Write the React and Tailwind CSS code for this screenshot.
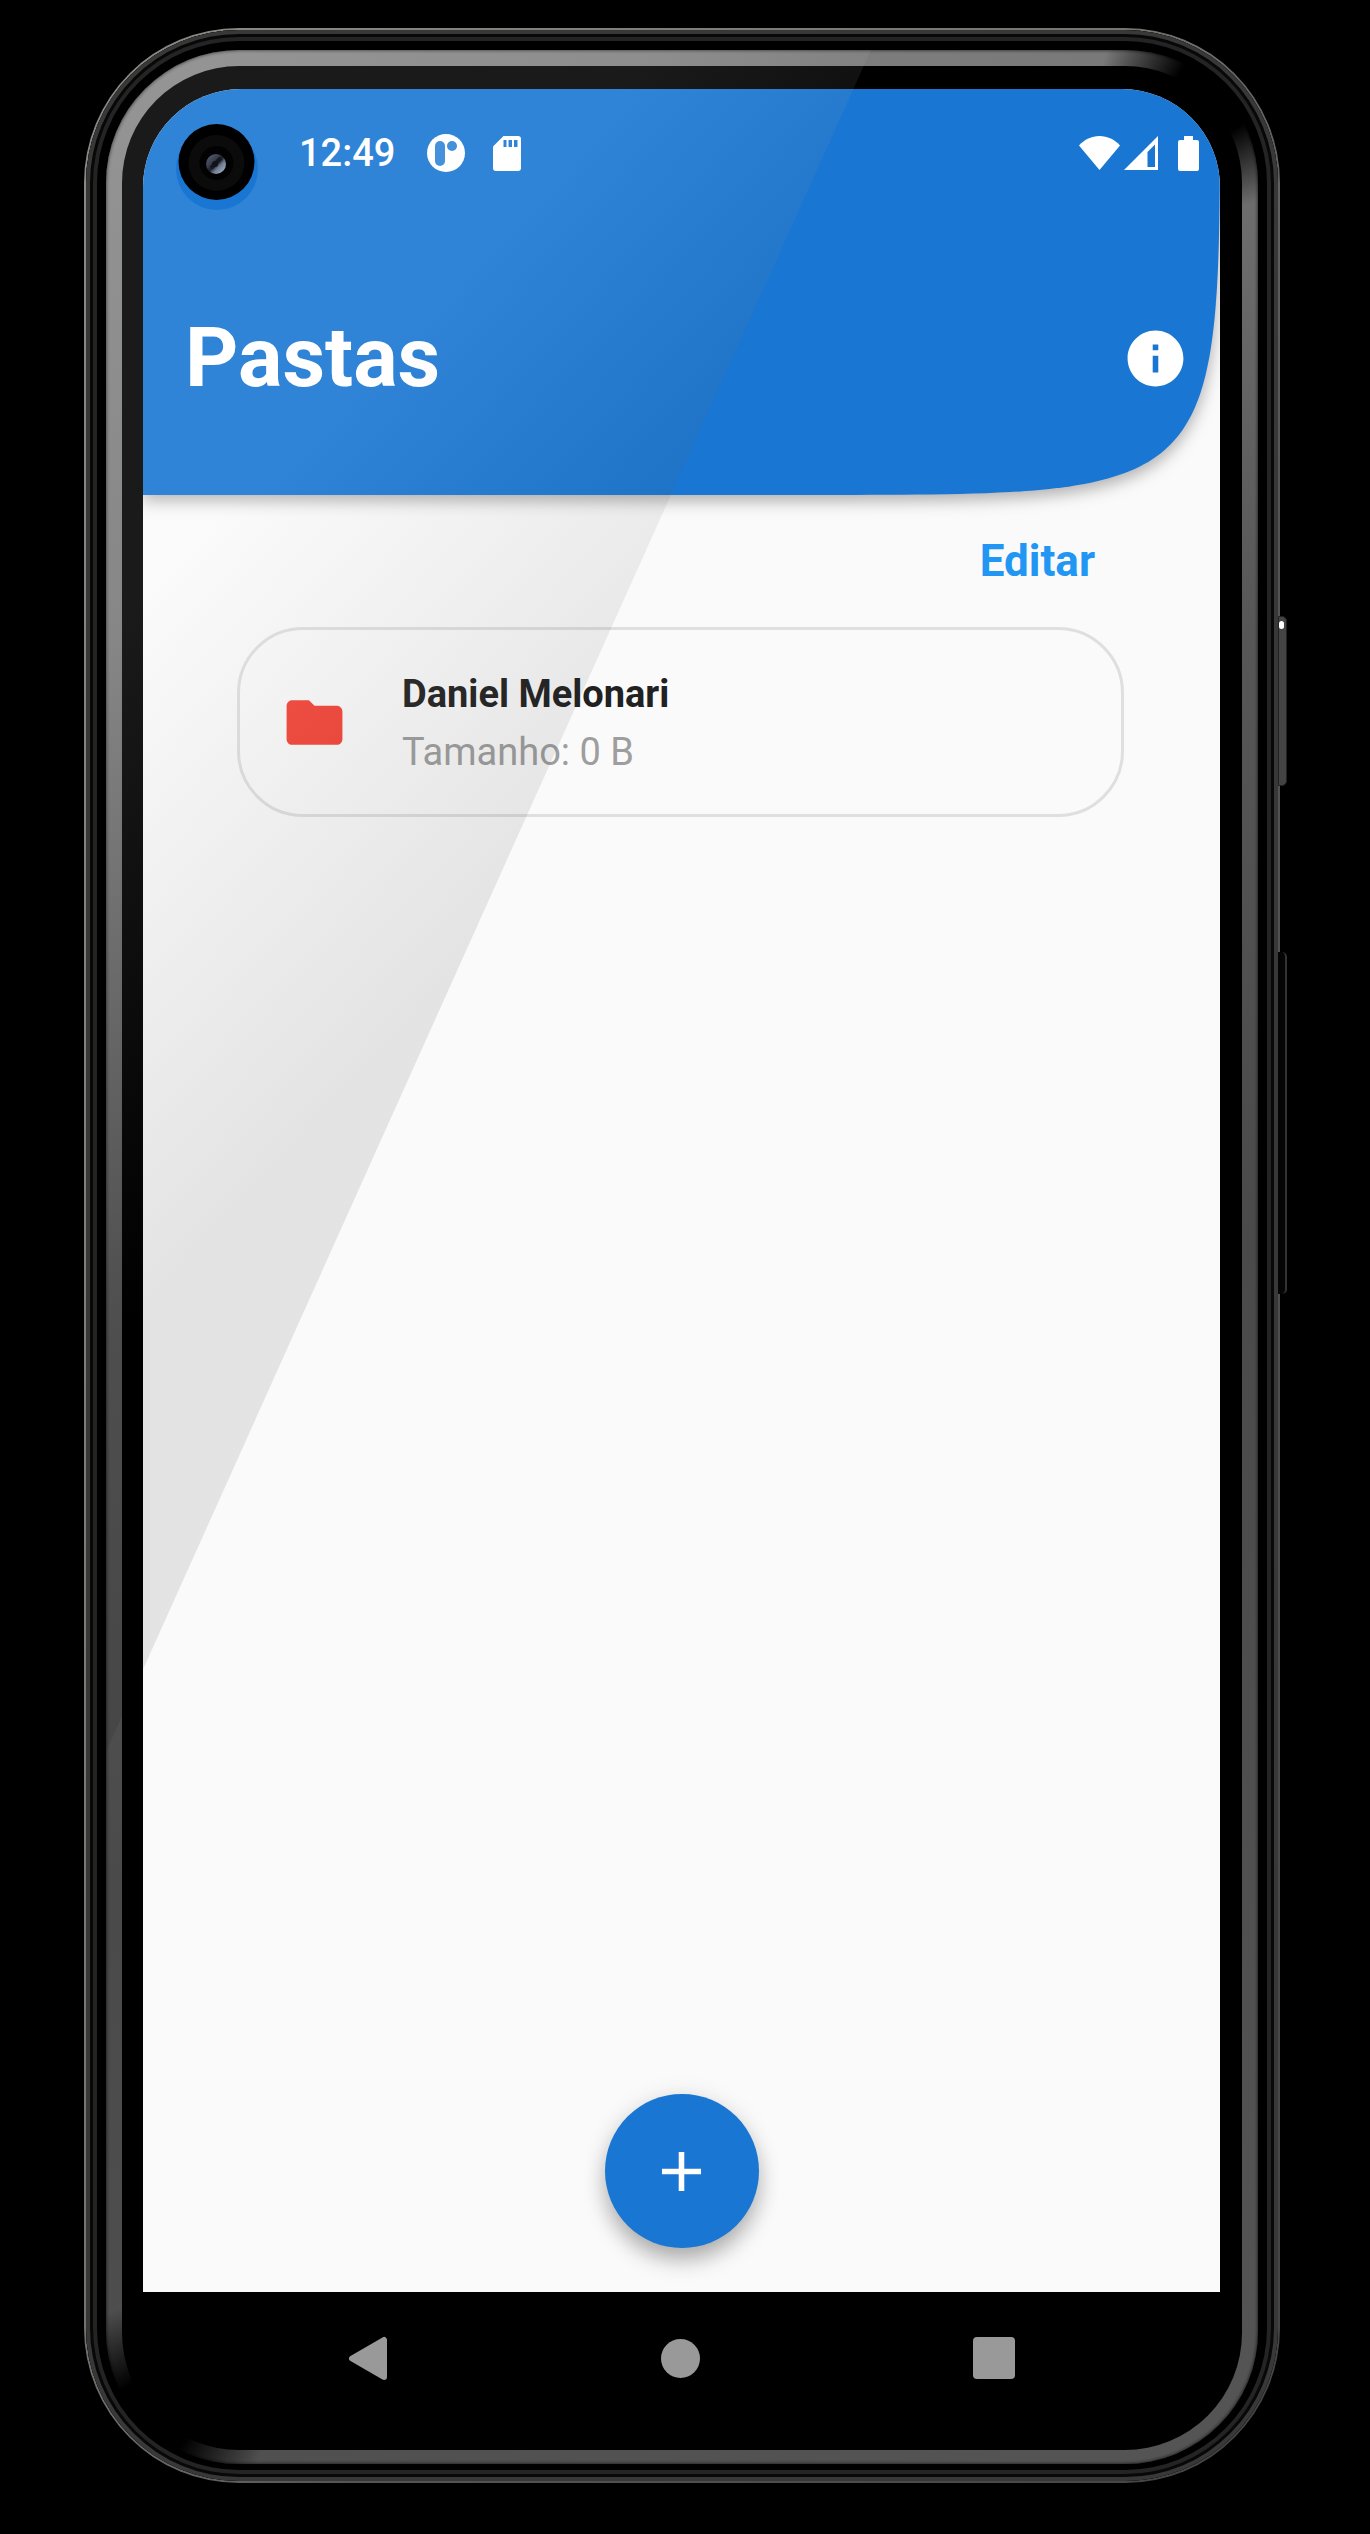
import React from "react";

function StatusBar() {
  return (
    <div className="flex h-[128px] items-center pl-[156px] pr-[21px]">
      <span className="text-[38px] font-medium leading-none">12:49</span>
      <svg className="ml-[32px] size-[38px]" viewBox="0 0 38 38" aria-hidden="true">
        <circle cx="19" cy="19" r="19" fill="#fff" />
        <rect x="8" y="7" width="10" height="25" rx="5" fill="#2f84d8" />
        <circle cx="25" cy="12" r="5" fill="#2f84d8" />
      </svg>
      <svg className="ml-[28px] h-[35px] w-[28px]" viewBox="0 0 28 35" aria-hidden="true">
        <path
          fill="#fff"
          fillRule="evenodd"
          d="M10.500 0H25a3 3 0 0 1 3 3v29a3 3 0 0 1-3 3H3a3 3 0 0 1-3-3V10.500L10.500 0ZM10.500 4v7h3V4Zm5 0v7h3.500V4Zm5.500 0v7h3.500V4Z"
        />
      </svg>
      <div className="ml-auto flex items-center">
        <svg className="h-[34px] w-[41px]" viewBox="0 0 41 34" aria-hidden="true">
          <path fill="#fff" d="M20.500 34 0 9.500C5.500 3.500 12.500 0 20.500 0S35.500 3.500 41 9.500Z" />
        </svg>
        <svg className="ml-[4px] size-[34px]" viewBox="0 0 34 34" aria-hidden="true">
          <path fill="#fff" fillRule="evenodd" d="M34 0v34H0ZM31 8.500 23.500 16v15H31Z" />
        </svg>
        <svg className="ml-[20px] h-[35px] w-[21px]" viewBox="0 0 21 35" aria-hidden="true">
          <path fill="#fff" d="M6 0h9v4h4a2 2 0 0 1 2 2v27a2 2 0 0 1-2 2H2a2 2 0 0 1-2-2V6a2 2 0 0 1 2-2h4Z" />
        </svg>
      </div>
    </div>
  );
}

function Header() {
  return (
    <header className="relative h-[406px] text-white">
      <svg
        className="absolute inset-0 h-full w-full overflow-visible drop-shadow-[0_6px_8px_rgba(0,0,0,0.3)]"
        viewBox="0 0 1077 406"
        preserveAspectRatio="none"
        aria-hidden="true"
      >
        <path fill="#1976d2" d="M0 0H1077V6C1077 406 1077 406 677 406H0Z" />
      </svg>
      <div className="relative">
        <StatusBar />
        <div className="flex items-center justify-between pl-[42px] pr-[31px] pt-[91px]">
          <h1 className="text-[83px] font-bold leading-[100px]">Pastas</h1>
          <button type="button" aria-label="Informações" className="size-[67px]">
            <svg viewBox="0 0 24 24" className="size-full" fill="#fff">
              <path d="M12 2C6.480 2 2 6.480 2 12s4.480 10 10 10 10-4.480 10-10S17.520 2 12 2zm1 15h-2v-6h2v6zm0-8h-2V7h2v2z" />
            </svg>
          </button>
        </div>
      </div>
    </header>
  );
}

function FolderCard() {
  return (
    <button
      type="button"
      className="ml-[94px] mr-[96px] flex h-[190px] items-center rounded-[66px] border-[3px] border-[#dfdfdf] pl-[41px] text-left"
    >
      <svg viewBox="0 0 24 24" className="size-[67px] shrink-0" fill="#f44336" aria-hidden="true">
        <path d="M10 4H4c-1.100 0-1.990.9-1.990 2L2 18c0 1.100.9 2 2 2h16c1.100 0 2-.9 2-2V8c0-1.100-.9-2-2-2h-8l-2-2z" />
      </svg>
      <span className="ml-[54px] flex flex-col pt-[2px] text-[38px] leading-[58px]">
        <span className="font-bold text-[#212121]">Daniel Melonari</span>
        <span className="text-[#9e9e9e]">Tamanho: 0 B</span>
      </span>
    </button>
  );
}

function NavBar() {
  return (
    <nav className="grid h-[132px] grid-cols-3 items-center justify-items-center pl-[68px] pr-[70px]">
      <button type="button" aria-label="Voltar">
        <svg className="h-[45px] w-[40px]" viewBox="0 0 40 45">
          <path
            d="M4 22.500 36 4v37Z"
            fill="#999"
            stroke="#999"
            strokeWidth="6"
            strokeLinejoin="round"
          />
        </svg>
      </button>
      <button type="button" aria-label="Início" className="size-[39px] rounded-full bg-[#999]" />
      <button type="button" aria-label="Recentes" className="size-[42px] rounded-[4px] bg-[#999]" />
    </nav>
  );
}

function Camera() {
  return (
    <svg
      className="absolute left-[70px] top-[72px] h-[88px] w-[84px]"
      viewBox="0 0 84 88"
      aria-hidden="true"
    >
      <defs>
        <linearGradient id="lens" x1="0" y1="0" x2="1" y2="1">
          <stop offset="0" stopColor="#5a6478" />
          <stop offset="0.35" stopColor="#39414f" />
          <stop offset="0.5" stopColor="#1c1f26" />
          <stop offset="0.65" stopColor="#6f7c92" />
          <stop offset="1" stopColor="#b4bfd2" />
        </linearGradient>
      </defs>
      <circle cx="41" cy="47" r="41" fill="#1976d2" />
      <circle cx="40.500" cy="40" r="38" fill="#000" />
      <circle cx="40.500" cy="41" r="28" fill="#0b0b0b" />
      <circle cx="40.500" cy="41" r="17" fill="#020202" />
      <circle cx="40" cy="42" r="10" fill="url(#lens)" />
      <path d="M35 46 45 36" stroke="#15171c" strokeWidth="4" />
      <circle cx="39" cy="42" r="3" fill="#111318" />
    </svg>
  );
}

export default function App() {
  return (
    <div className="flex min-h-screen bg-black pb-[51px] pl-[84px] pr-[90px] pt-[28px] font-[Roboto,'Noto_Sans',sans-serif]">
      <div className="relative flex flex-1 rounded-[155px] bg-[linear-gradient(115deg,#8d8a86_0%,#77736f_45%,#555_60%,#444_100%)] p-[2px]">
        <div className="absolute -right-[7px] top-[588px] h-[170px] w-[9px] rounded-r-[5px] border border-[#222] bg-[#444]">
          <div className="mt-[4px] h-[8px] w-[5px] rounded-full bg-white" />
        </div>
        <div className="absolute -right-[7px] top-[924px] h-[342px] w-[9px] rounded-r-[5px] border-r-2 border-[#333] bg-[#050505]" />

        <div className="relative flex flex-1 rounded-[153px] bg-black px-[20px] pb-[17px] pt-[20px] shadow-[inset_0_0_0_4px_#383838,inset_0_0_0_7px_#080808,inset_0_0_0_11px_#242424]">
          <div className="relative flex flex-1 rounded-[133px] bg-[radial-gradient(circle_at_calc(100%-45px)_45px,#000_40px,transparent_115px),radial-gradient(circle_at_45px_calc(100%-45px),#000_40px,transparent_115px),linear-gradient(150deg,#8a8a8a_0%,#787878_20%,#575757_40%,#4a4a4a_60%,#555_100%)] px-[16px] pb-[14px] pt-[16px] shadow-[inset_0_0_3px_1px_rgba(0,0,0,0.5)]">
            <div className="flex flex-1 rounded-[117px] bg-black pb-[26px] pl-[21px] pr-[22px] pt-[23px]">
              <main className="flex min-w-0 flex-1 flex-col">
                <div className="flex flex-1 flex-col overflow-hidden rounded-t-[98px] bg-[#fafafa]">
                  <Header />
                  <div className="flex justify-end pr-[125px] pt-[34px]">
                    <button type="button" className="text-[44px] font-bold leading-[64px] text-[#2196f3]">
                      Editar
                    </button>
                  </div>
                  <div className="flex flex-1 flex-col pt-[34px]">
                    <FolderCard />
                    <button
                      type="button"
                      aria-label="Adicionar pasta"
                      className="mb-[44px] mt-auto flex size-[154px] items-center justify-center self-center rounded-full bg-[#1976d2] shadow-[0_14px_22px_-2px_rgba(0,0,0,0.28),0_2px_24px_rgba(0,0,0,0.1)]"
                    >
                      <svg viewBox="0 0 24 24" className="size-[67px]" fill="#fff">
                        <path d="M19 13h-6v6h-2v-6H5v-2h6V5h2v6h6v2z" />
                      </svg>
                    </button>
                  </div>
                </div>
                <NavBar />
              </main>
            </div>
            <div className="pointer-events-none absolute inset-0 rounded-[133px] bg-[linear-gradient(133deg,rgba(255,255,255,0.1)_400px,rgba(0,0,0,0.09)_885px)] [clip-path:polygon(0_0,66.4%_0,0_70.5%)]" />
            <Camera />
          </div>
        </div>
      </div>
    </div>
  );
}
